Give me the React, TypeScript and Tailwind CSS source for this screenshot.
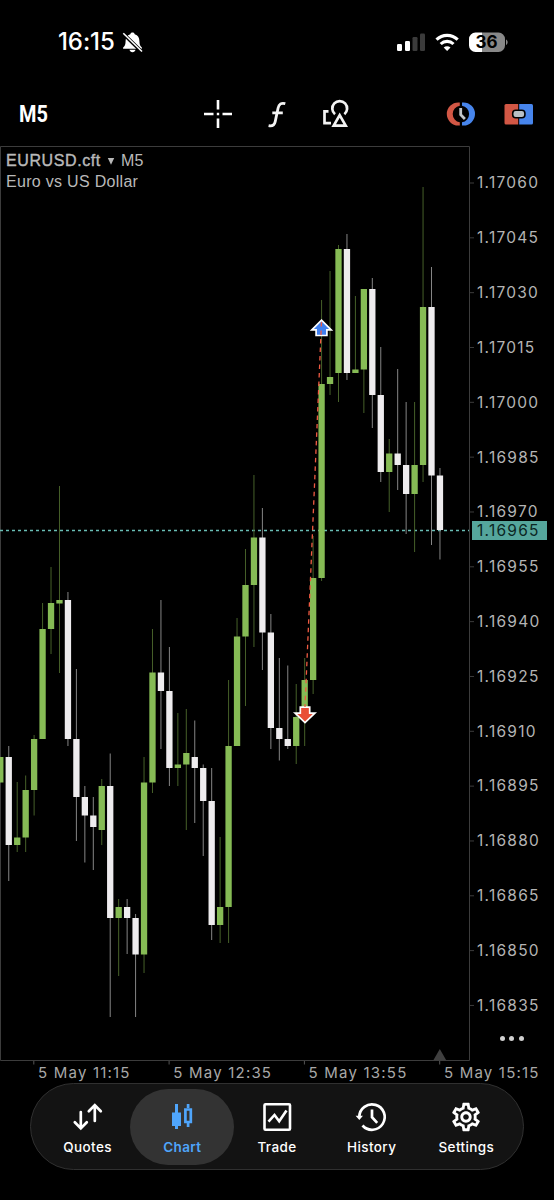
import { FC, ReactNode } from "react";
import { MdOutlineSettings } from "react-icons/md";

type Candle = [up: number, high: number, top: number, bottom: number, low: number];

const CANDLE_STEP = 8.455;

// 1 = bullish, 0 = bearish
const candles: Candle[] = [
  [1, 757, 757, 782.5, 782.5],
  [0, 746, 757, 845, 881],
  [1, 782, 837.5, 845, 852],
  [1, 775.5, 790, 837.5, 852],
  [1, 735, 739, 790, 815.5],
  [1, 603, 629, 739, 739],
  [1, 567, 603, 629, 654],
  [1, 486, 600, 603.5, 673],
  [0, 592, 600, 739, 746],
  [0, 669, 739, 797, 841],
  [0, 786, 797, 815.5, 862.5],
  [0, 797, 815.5, 827, 870],
  [1, 779, 786, 830, 845],
  [0, 753.5, 786, 918, 1017],
  [1, 899, 907, 918, 976],
  [0, 899, 907, 918, 954],
  [0, 914, 918, 954.5, 1017],
  [1, 757, 782.5, 954.5, 973],
  [1, 629, 672.5, 782.5, 793],
  [0, 600, 672.5, 691, 749],
  [0, 647, 691, 768, 786],
  [1, 713, 764.5, 768, 786],
  [1, 709, 753, 764.5, 830],
  [0, 720.5, 757, 768, 823],
  [0, 764.5, 768, 801, 856],
  [0, 768, 801, 925, 940],
  [1, 837, 907, 925, 943],
  [1, 680, 746, 907, 943],
  [1, 618, 636.5, 746, 746],
  [1, 549, 585, 636.5, 706],
  [1, 475, 537.5, 585, 647],
  [0, 508, 537.5, 632.5, 670],
  [0, 614, 632.5, 728, 749],
  [0, 658, 728, 739, 760.5],
  [0, 665.5, 739, 746, 749],
  [1, 684, 717, 746, 764],
  [1, 658, 680, 717, 746],
  [1, 536, 578, 680, 694],
  [1, 300, 384, 578, 581],
  [1, 271, 377, 384, 395],
  [1, 245, 249, 373, 402],
  [0, 234, 249, 373, 380],
  [1, 296, 369.5, 373, 373],
  [1, 289, 289, 369.5, 413],
  [0, 278, 289, 395, 428],
  [0, 347, 395, 472, 482],
  [1, 439, 453.5, 472, 512],
  [0, 369, 453.5, 465, 490],
  [0, 402, 465, 494, 534],
  [1, 402, 465, 494, 552],
  [1, 187, 307, 465, 482],
  [0, 267, 307, 475.5, 545],
  [0, 468, 475.5, 530, 559.5],
];

const prices = [
  "1.17060", "1.17045", "1.17030", "1.17015", "1.17000", "1.16985", "1.16970", "1.16955",
  "1.16940", "1.16925", "1.16910", "1.16895", "1.16880", "1.16865", "1.16850", "1.16835",
];

const times = ["5 May 11:15", "5 May 12:35", "5 May 13:55", "5 May 15:15"];

const StatusBar: FC = () => (
  <div className="flex h-[84px] shrink-0 items-center justify-between pl-[58px] pr-[46px] text-white">
    <div className="flex items-center">
      <span className="w-[64px] whitespace-nowrap text-[24px] font-medium leading-none tracking-[-0.1px]">16:15</span>
      <svg width="21" height="21" viewBox="122 31 21 21">
        <path d="M132.5 31.6c-1.2 0-2 .7-2.2 1.7-3.3 1-4.7 3.5-4.7 6.7 0 3.500-.8 4.900-2.200 6.200-.7.700-.5 1.600.5 1.600h17.200c1 0 1.200-.9.500-1.600-1.400-1.300-2.200-2.700-2.200-6.200 0-3.200-1.400-5.700-4.700-6.700-.2-1-1-1.700-2.200-1.700zM129.500 48.700h6c-.3 1.500-1.500 2.500-3 2.500s-2.700-1-3-2.500z" fill="#fff" />
        <path d="M122.800 32.300 141.800 50.800" stroke="#000" strokeWidth="3.600" />
        <path d="M123.300 32.300 142 50.500" stroke="#fff" strokeWidth="1.600" />
      </svg>
    </div>
    <div className="flex items-center">
      <svg width="112" height="22" viewBox="396 30 112 22">
        <rect x="397" y="43" width="5" height="7" rx="1.200" fill="#fff" />
        <rect x="405" y="40" width="5" height="10" rx="1.200" fill="#fff" />
        <rect x="412.500" y="36" width="5" height="14" rx="1.200" fill="#3b3b3b" />
        <rect x="420" y="32.500" width="5" height="17.500" rx="1.200" fill="#3b3b3b" />
        <g fill="none" stroke="#fff" strokeWidth="3.100">
          <path d="M436.500 38.700a15.200 15.200 0 0 1 21.200 0" />
          <path d="M440.700 43a9.200 9.200 0 0 1 12.800 0" />
        </g>
        <path d="M447.100 50l-3.400-3.400a4.900 4.900 0 0 1 6.800 0z" fill="#fff" />
        <path d="M482 31.500h16.500a6.500 6.500 0 0 1 6.500 6.500v6.500a6.500 6.500 0 0 1-6.500 6.500H482z" fill="#888" />
        <path d="M482 31.500h-6.500a6.500 6.500 0 0 0-6.500 6.500v6.500a6.500 6.500 0 0 0 6.500 6.500h6.500z" fill="#fff" />
        <path d="M506 38.500c2.200 1 2.200 4.500 0 5.500z" fill="#888" />
        <text x="486.500" y="47.400" textAnchor="middle" fontSize="17" fontWeight="700" fill="#000">36</text>
      </svg>
    </div>
  </div>
);

const Toolbar: FC = () => (
  <div className="flex h-[60px] shrink-0 items-center pl-[19px] pr-[19px] text-white">
    <span className="w-[183px] origin-left scale-x-[0.83] font-[Roboto,sans-serif] text-[24px] font-bold leading-none">M5</span>
    <svg className="-ml-px" width="34" height="32" viewBox="201 98 34 32" fill="none" stroke="#fff" strokeWidth="2.600">
      <path d="M204 114h9.500M222.500 114h9.500M218 100v9.500M218 118.500v9.500M216.800 114h2.400" />
    </svg>
    <svg className="ml-[31px]" width="24" height="32" viewBox="266 98 24 32" fill="none" stroke="#f3f3f3" strokeWidth="2.800">
      <path d="M285.300 103.600c-4-1-6.300.3-7.200 4.400l-2.900 13.600c-.8 3.600-2.700 4.900-6.600 4.100M272.300 112.800h10.500" />
    </svg>
    <svg className="ml-[31px]" width="32" height="32" viewBox="321 98 32 32" fill="none" stroke="#f3f3f3" strokeWidth="2.700">
      <path d="M335 114.200a7.400 7.400 0 1 1 9.400 0M328.500 111.400h-4v11.700h6.500M339.700 115.200l-6 10.500h12z" />
    </svg>
    <div className="ml-auto flex gap-[26px]">
      <svg width="32" height="32" viewBox="445 98 32 32">
        <path d="M459.800 102.500h-1.500a11.500 11.500 0 0 0 0 23h1.500v-3.200a8.400 8.400 0 0 1 0-16.600z" fill="#d25745" />
        <path d="M462 102.500h1.500a11.500 11.500 0 0 1 0 23h-1.500v-3.200a8.400 8.400 0 0 0 0-16.600z" fill="#4785ec" />
        <path d="M460.700 108v6.800l4.200 4.300" fill="none" stroke="#c3c7ca" strokeWidth="2.800" />
      </svg>
      <svg width="32" height="32" viewBox="503 98 32 32">
        <path d="M506 104h12.200v20.500H506a1.500 1.500 0 0 1-1.500-1.500v-17.500a1.500 1.500 0 0 1 1.500-1.500z" fill="#d25745" />
        <path d="M519.200 104h12.300a1.500 1.500 0 0 1 1.500 1.500V123a1.500 1.500 0 0 1-1.500 1.500h-12.300z" fill="#4785ec" />
        <rect x="512.700" y="110.200" width="12.200" height="7.600" rx="3" fill="#b9c0c5" stroke="#000" strokeWidth="1.600" />
      </svg>
    </div>
  </div>
);

const CandleChart: FC = () => (
  <svg className="block" width="476" height="920" viewBox="0 146 476 920">
    <path d="M.5 146.500H469.500V1060.500H.5z" fill="none" stroke="#3c3c3c" />
    {prices.map((p, i) => (
      <path key={p} d={`M470 ${183 + i * 54.83}h4`} stroke="#3c3c3c" />
    ))}
    {times.map((t, i) => (
      <path key={t} d={`M${33.8 + i * 135.3} 1061v3.500`} stroke="#555" />
    ))}
    <path d="M433.200 1060.500L439.800 1049l6.600 11.500z" fill="#404040" />

    <path d="M0 530.500H469" stroke="#69bdb5" strokeWidth="1.300" strokeDasharray="3 3" />

    {candles.map(([up, high, top, bottom, low], i) => {
      const x = 0.3 + i * CANDLE_STEP;
      return (
        <g key={i}>
          <path d={`M${x} ${high}V${low}`} stroke={up ? "#466029" : "#858585"} strokeWidth="1" />
          <rect x={x - 3.15} y={top} width="6.3" height={bottom - top} fill={up ? "#86bb55" : "#eeecee"} />
        </g>
      );
    })}

    {/* buy / sell markers */}
    <path d="M300.300 707.200h9.400v6h5.200l-9.900 9.400-9.900-9.400h5.200z" fill="#e94f37" stroke="#fff" strokeWidth="1.700" />
    <path d="M321.500 320.200l9.700 9.600h-4.300v5.700h-10.800v-5.700h-4.300z" fill="#4080ef" stroke="#fff" strokeWidth="1.700" />
    <path d="M321.500 322L305 707" stroke="#ef5a42" strokeWidth="1.300" strokeDasharray="4.500 4" />
  </svg>
);

const PriceScale: FC = () => (
  <div className="relative flex-1">
    <div className="flex flex-col pl-px pt-[9.600px] text-[15.500px] tracking-[1.250px] text-[#b4b4b4]">
      {prices.map((p) => (
        <div key={p} className="flex h-[54.83px] items-center">{p}</div>
      ))}
    </div>
    <div className="absolute -left-[4px] top-[375px] flex h-[19px] w-[75px] items-center bg-[#55a69c] pl-[5px] text-[15.500px] tracking-[1.250px] text-[#0c2623]">
      1.16965
    </div>
    <div className="absolute left-[23.500px] top-[889.500px] flex gap-[4.700px]">
      <i className="size-[5px] rounded-full bg-[#d0d0d0]" />
      <i className="size-[5px] rounded-full bg-[#d0d0d0]" />
      <i className="size-[5px] rounded-full bg-[#d0d0d0]" />
    </div>
  </div>
);

const NavItem: FC<{ label: string, active?: boolean, children: ReactNode }> = ({ label, active, children }) => (
  <div className={`relative flex w-[94.7px] flex-col items-center pt-[16px] ${active ? "text-[#4fa5fb]" : "text-white"}`}>
    {active && <span className="absolute -inset-x-[4.700px] top-[5px] h-[76px] rounded-full bg-[#333]" />}
    <div className="relative size-[34px]">{children}</div>
    <span className={`relative mt-[4px] text-[13.500px] leading-[18px] tracking-[0.400px] ${active ? "font-semibold" : "font-medium"}`}>{label}</span>
  </div>
);

const BottomNav: FC = () => (
  <div className="mx-[30px] flex h-[87px] shrink-0 justify-center rounded-full border border-[#303030] bg-[#131313]">
    <NavItem label="Quotes">
      <svg width="34" height="34" viewBox="70.700 1100 34 34" fill="none" stroke="currentColor" strokeWidth="2.700" strokeLinecap="round">
        <path d="M80.500 1112v16M74.500 1122.200l6 6.200 6-6.200M94.500 1121v-15M88.500 1111.300l6-6.200 6 6.200" />
      </svg>
    </NavItem>
    <NavItem label="Chart" active>
      <svg width="34" height="34" viewBox="165 1100 34 34">
        <path d="M175 1104h3v8.500h3v13.500h-3v3h-3v-3h-3v-13.500h3z" fill="currentColor" />
        <path d="M185.400 1109.500h5.400v12.500h-5.400zM188.100 1104v4M188.100 1123v4" fill="none" stroke="currentColor" strokeWidth="2.700" />
      </svg>
    </NavItem>
    <NavItem label="Trade">
      <svg width="34" height="34" viewBox="260 1100 34 34" fill="none" stroke="currentColor" strokeWidth="2.600">
        <rect x="264.500" y="1104.200" width="25.500" height="25.500" rx="1" />
        <path d="M268.500 1121.700l6-6.700 4.700 6.200 7.300-10.700" />
      </svg>
    </NavItem>
    <NavItem label="History">
      <svg width="34" height="34" viewBox="355.200 1100 34 34" fill="none" stroke="currentColor" strokeWidth="2.700">
        <path d="M359.500 1117a12.700 12.700 0 1 1 3.200 8.500M372.200 1109.500v7.700l5.200 5.700" />
        <path d="M355.800 1115.800h7.400l-3.700 4.200z" fill="currentColor" stroke="none" />
      </svg>
    </NavItem>
    <NavItem label="Settings">
      <MdOutlineSettings size={34} />
    </NavItem>
  </div>
);

export default function App() {
  return (
    <div className="flex h-[1200px] w-[554px] flex-col overflow-hidden bg-black font-[Inter,sans-serif]">
      <StatusBar />
      <Toolbar />
      <div className="relative mt-[2px] flex h-[918px] shrink-0">
        <CandleChart />
        <PriceScale />
        <div className="absolute left-[6px] top-[4px] font-['Liberation_Sans',sans-serif] text-[16px] leading-[21px] tracking-[0.300px] text-[#b9b9b9]">
          <div className="flex items-center">
            <span className="tracking-[0.600px] [-webkit-text-stroke:0.4px_#b9b9b9]">EURUSD.cft</span>
            <svg className="mx-[6px]" width="8" height="8" viewBox="0 0 8 8">
              <path d="M.8 1h6.400L4 7.800z" fill="#b9b9b9" />
            </svg>
            <span>M5</span>
          </div>
          <div>Euro vs US Dollar</div>
        </div>
      </div>
      <div className="flex h-[19px] shrink-0 items-center pl-[38px] text-[15px] tracking-[1.200px] text-[#a8a8a8]">
        {times.map((t) => (
          <span key={t} className="w-[135.300px] shrink-0 whitespace-nowrap">{t}</span>
        ))}
      </div>
      <BottomNav />
    </div>
  );
}
